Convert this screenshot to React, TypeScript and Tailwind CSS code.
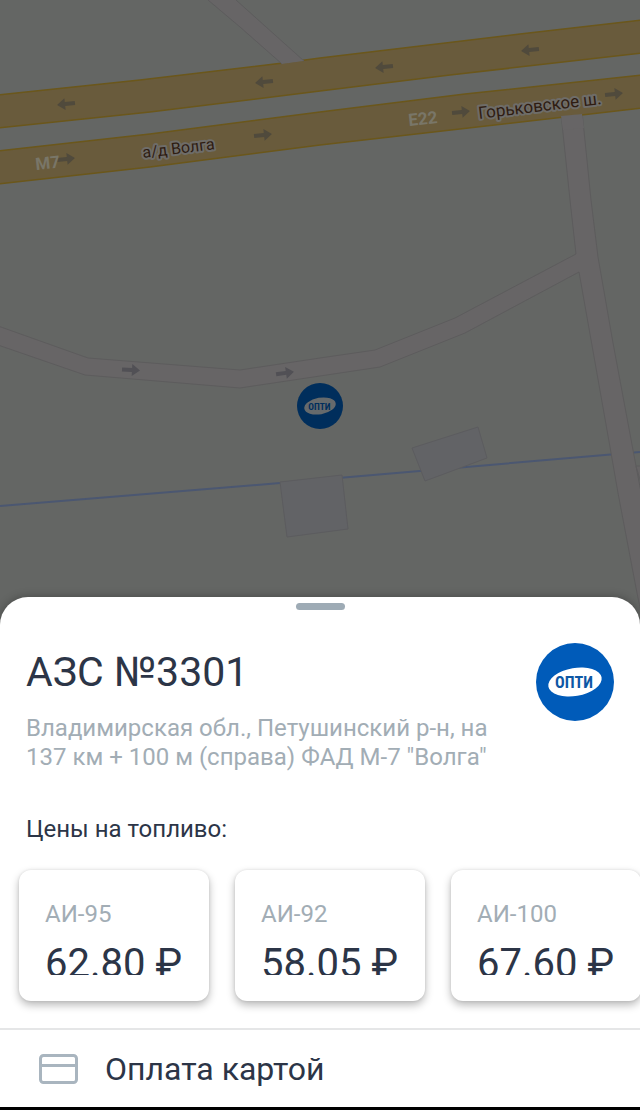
import React from 'react';

interface FuelPrice {
  name: string;
  price: string;
}

interface ArrowProps {
  x: number;
  y: number;
  angle: number;
  color: string;
}

interface LogoProps {
  className: string;
  circle: string;
  ellipse: string;
  text: string;
}

const fuelPrices: FuelPrice[] = [
  { name: 'АИ-95', price: '62.80 ₽' },
  { name: 'АИ-92', price: '58.05 ₽' },
  { name: 'АИ-100', price: '67.60 ₽' },
];

const highwayArrows = [
  { x: 66, y: 104, angle: 174 },
  { x: 264, y: 82, angle: 174 },
  { x: 384, y: 67, angle: 174 },
  { x: 530, y: 50, angle: 174 },
  { x: 66, y: 159, angle: -6 },
  { x: 263, y: 135, angle: -6 },
  { x: 461, y: 112, angle: -6 },
  { x: 614, y: 94, angle: -6 },
];

const Arrow: React.FC<ArrowProps> = ({ x, y, angle, color }) => (
  <path
    d="M-9 -2H1V-6L9 0L1 6V2H-9Z"
    fill={color}
    transform={`translate(${x} ${y}) rotate(${angle})`}
  />
);

const Logo: React.FC<LogoProps> = ({ className, circle, ellipse, text }) => (
  <svg className={className} viewBox="0 0 78 78" role="img" aria-label="ОПТИ">
    <circle cx="39" cy="39" r="39" fill={circle} />
    <ellipse cx="39" cy="39" rx="27" ry="14" fill={ellipse} transform="rotate(-10 39 39)" />
    <text
      x="38"
      y="45"
      textAnchor="middle"
      fontSize="16"
      fontWeight="700"
      fontFamily="'Roboto Condensed', 'Liberation Sans Narrow', Roboto, sans-serif"
      fill={text}
    >
      ОПТИ
    </text>
  </svg>
);

const StationMap: React.FC = () => (
  <svg
    className="absolute inset-0 h-full w-full"
    viewBox="0 0 640 627"
    preserveAspectRatio="xMidYMin slice"
    fontFamily="Roboto, sans-serif"
  >
    <rect width="640" height="627" fill="#646664" />

    {/* Canal */}
    <path d="M0 506L280 483L640 452" fill="none" stroke="#4b5771" strokeWidth="2" />

    {/* Buildings */}
    <g fill="#626366" stroke="#5c5c5f">
      <path d="M280 482L342 475L348 529L287 537Z" />
      <path d="M412 448L478 427L487 458L425 481Z" />
    </g>

    {/* Side roads */}
    <g fill="#676566" stroke="#5d5c5d">
      <path d="M561 114L570 200L576 254L455 318L375 350L320 358L240 370L88 358L-2 326V345L85 375L240 388L320 376L380 367L465 333L579 272L610 447L618 493L637 593L644 627H670L640 487L633 450L613 343L598 257L591 200L582 111Z" />
      <path d="M636 466L645 497V466Z" />
    </g>

    {/* Highway */}
    <g fill="#695b3c" stroke="#6b571b" strokeWidth="1.5">
      <path d="M-2 95L140 80L283 63L320 58L520 34L642 20V53L450 75L320 91L150 112L-2 128Z" />
      <path d="M-2 151L150 134L320 112L465 94L642 75V108L320 145L150 167L-2 184Z" />
    </g>
    <path d="M208 0L240 27L282 64L304 61L275 35L236 0Z" fill="#676566" />
    <path d="M208 0L240 27L282 64M236 0L275 35L304 61" fill="none" stroke="#5d5c5d" />
    <path d="M561 116L563 130L584 128L582 114Z" fill="#676566" />

    {highwayArrows.map((arrow) => (
      <Arrow key={`${arrow.x}-${arrow.y}`} {...arrow} color="#504a3c" />
    ))}
    <Arrow x={131} y={370} angle={3} color="#515055" />
    <Arrow x={285} y={373} angle={-8} color="#515055" />

    {/* Road names */}
    <g fontSize="17" fontWeight="700" fill="#797668">
      <text transform="translate(36 170) rotate(-6)">М7</text>
      <text transform="translate(409 126) rotate(-6)">E22</text>
    </g>
    <g
      fill="#2f1c12"
      stroke="#6e6c68"
      strokeWidth="4"
      strokeLinejoin="round"
      paintOrder="stroke"
    >
      <text fontSize="16" transform="translate(143 158) rotate(-7)">а/д Волга</text>
      <text fontSize="17" transform="translate(479 119) rotate(-7)">Горьковское ш.</text>
    </g>
  </svg>
);

const FuelCard: React.FC<FuelPrice> = ({ name, price }) => (
  <li className="w-[190px] shrink-0 rounded-xl bg-white px-[26px] pt-[30px] pb-[26px] shadow-[0_4px_8px_rgba(0,0,0,0.28),0_0_3px_rgba(0,0,0,0.1)]">
    <p className="text-2xl leading-7 text-[#a2adb5]">{name}</p>
    {/* Fixed height cuts the digits at the baseline */}
    <p className="mt-[10px] h-[37px] overflow-hidden text-[40px] leading-[52px] whitespace-nowrap">
      {price}
    </p>
  </li>
);

const CardIcon: React.FC = () => (
  <svg className="h-[30px] w-10" viewBox="0 0 40 30" fill="none" stroke="#a9b5bf" strokeWidth="3" aria-hidden="true">
    <rect x="1.5" y="1.5" width="36" height="27" rx="3" />
    <path d="M2 11.5H38" />
  </svg>
);

const App: React.FC = () => {
  return (
    <div className="flex min-h-screen flex-col overflow-hidden border-b-[3px] border-black bg-white font-['Roboto','Noto_Sans',sans-serif] text-[#2c3547]">
      <section className="relative min-h-[400px] flex-1" aria-label="Карта">
        <StationMap />
        <button
          type="button"
          className="absolute top-[383px] left-1/2 -translate-x-1/2 rounded-full"
          aria-label="АЗС №3301"
        >
          <Logo className="size-[46px]" circle="#002e5c" ellipse="#666a6c" text="#002e5c" />
        </button>
      </section>

      <main className="relative -mt-[30px] rounded-t-[28px] bg-white pt-[6px] shadow-[0_0_10px_rgba(0,0,0,0.3)]">
        <button
          type="button"
          className="mx-auto block h-[7px] w-[49px] rounded-full bg-[#9eabb5]"
          aria-label="Свернуть"
        />

        <header className="mt-[33px] flex items-start gap-4 px-[26px]">
          <div className="flex-1 pt-1">
            <h1 className="text-[41px] leading-[50px]">АЗС №3301</h1>
            <p className="mt-[17px] text-2xl leading-[29px] text-[#a2adb5]">
              Владимирская обл., Петушинский р-н, на 137 км + 100 м (справа) ФАД М-7 "Волга"
            </p>
          </div>
          <Logo className="size-[78px] shrink-0" circle="#005bb9" ellipse="#ffffff" text="#0d57a5" />
        </header>

        <h2 className="mt-[43px] px-[26px] text-2xl leading-7">Цены на топливо:</h2>
        <ul className="flex gap-[26px] overflow-x-auto px-[19px] py-[27px] [scrollbar-width:none]">
          {fuelPrices.map((fuel) => (
            <FuelCard key={fuel.name} {...fuel} />
          ))}
        </ul>

        <div className="flex items-center gap-[26px] border-t-2 border-[#e5e6e7] px-[39px] pt-[19px] pb-[18px]">
          <CardIcon />
          <p className="text-[32px] leading-10">Оплата картой</p>
        </div>
      </main>
    </div>
  );
};

export default App;
